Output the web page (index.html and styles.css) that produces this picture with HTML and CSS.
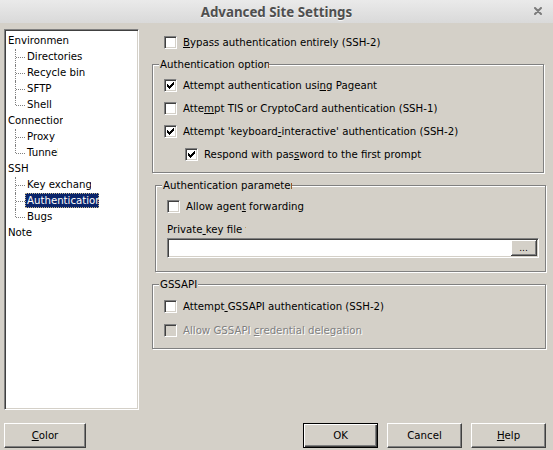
FILE: index.html
```html
<!DOCTYPE html>
<html lang="en">
<head>
<meta charset="utf-8">
<title>Advanced Site Settings</title>
<link rel="stylesheet" href="styles.css">
</head>
<body>
<div class="window">
  <header class="titlebar">
    <span class="title">Advanced Site Settings</span>
    <svg class="close" width="8" height="8" viewBox="0 0 8 8"><path d="M1 1L7 7M7 1L1 7" stroke="#7b7b7b" stroke-width="2" stroke-linecap="round"/></svg>
  </header>
  <div class="main">
    <div class="tree">
      <ul class="tree-list">
        <li>
          <div class="trow"><span class="tlabel clip-top">Environment</span></div>
          <ul class="kids">
            <li class="kid"><span class="tlabel">Directories</span></li>
            <li class="kid"><span class="tlabel">Recycle bin</span></li>
            <li class="kid"><span class="tlabel">SFTP</span></li>
            <li class="kid"><span class="tlabel">Shell</span></li>
          </ul>
        </li>
        <li>
          <div class="trow"><span class="tlabel clip-conn">Connection</span></div>
          <ul class="kids">
            <li class="kid"><span class="tlabel">Proxy</span></li>
            <li class="kid"><span class="tlabel clip-tun">Tunnels</span></li>
          </ul>
        </li>
        <li>
          <div class="trow"><span class="tlabel">SSH</span></div>
          <ul class="kids">
            <li class="kid"><span class="tlabel clip-kex">Key exchange</span></li>
            <li class="kid"><span class="tlabel clip-auth selected">Authentication</span></li>
            <li class="kid"><span class="tlabel">Bugs</span></li>
          </ul>
        </li>
        <li><div class="trow"><span class="tlabel">Note</span></div></li>
      </ul>
    </div>

    <div class="panel">
      <div class="check bypass"><span class="cb"></span><span class="ctext"><u>B</u>ypass authentication entirely (SSH-2)</span></div>

      <div class="group g-opts">
        <span class="legend legend-opts">Authentication options</span>
        <div class="check"><span class="cb"><svg width="11" height="11" viewBox="0 0 11 11"><path d="M2 4h1v3h-1zM3 5h1v3h-1zM4 6h1v3h-1zM5 5h1v3h-1zM6 4h1v3h-1zM7 3h1v3h-1zM8 2h1v3h-1z" fill="#000" shape-rendering="crispEdges"/></svg></span><span class="ctext">Attempt authentication usi<u>n</u>g Pageant</span></div>
        <div class="check"><span class="cb"></span><span class="ctext">Atte<u>m</u>pt TIS or CryptoCard authentication (SSH-1)</span></div>
        <div class="check"><span class="cb"><svg width="11" height="11" viewBox="0 0 11 11"><path d="M2 4h1v3h-1zM3 5h1v3h-1zM4 6h1v3h-1zM5 5h1v3h-1zM6 4h1v3h-1zM7 3h1v3h-1zM8 2h1v3h-1z" fill="#000" shape-rendering="crispEdges"/></svg></span><span class="ctext">Attempt 'keyboard<u>-</u>interactive' authentication (SSH-2)</span></div>
        <div class="check indent"><span class="cb"><svg width="11" height="11" viewBox="0 0 11 11"><path d="M2 4h1v3h-1zM3 5h1v3h-1zM4 6h1v3h-1zM5 5h1v3h-1zM6 4h1v3h-1zM7 3h1v3h-1zM8 2h1v3h-1z" fill="#000" shape-rendering="crispEdges"/></svg></span><span class="ctext">Respond with pas<u>s</u>word to the first prompt</span></div>
      </div>

      <div class="group g-params">
        <span class="legend legend-params">Authentication parameters</span>
        <div class="check"><span class="cb"></span><span class="ctext">Allow agen<u>t</u> forwarding</span></div>
        <div class="keylabel">Private<u> </u>key file for authentication:</div>
        <div class="keyfield"><span class="keyinput"></span><span class="browse">...</span></div>
      </div>

      <div class="group g-gss">
        <span class="legend">GSSAPI</span>
        <div class="check"><span class="cb"></span><span class="ctext">Attempt<u> </u>GSSAPI authentication (SSH-2)</span></div>
        <div class="check disabled second"><span class="cb"></span><span class="ctext">Allow GSSAPI <u>c</u>redential delegation</span></div>
      </div>
    </div>
  </div>

  <footer class="footer">
    <button class="btn btn-color" type="button"><u>C</u>olor</button>
    <button class="btn default" type="button">OK</button>
    <button class="btn" type="button">Cancel</button>
    <button class="btn" type="button"><u>H</u>elp</button>
  </footer>
</div>
</body>
</html>
```

FILE: styles.css
```css
* { box-sizing: border-box; }

html, body {
  margin: 0;
  padding: 0;
}

body {
  width: 553px;
  height: 450px;
  overflow: hidden;
  background: #d4d0c8;
  font-family: "DejaVu Sans", sans-serif;
  font-size: 10.2px;
  color: #000;
}

.window {
  width: 553px;
  height: 450px;
}

/* title bar */
.titlebar {
  position: relative;
  height: 23px;
  display: flex;
  align-items: center;
  justify-content: center;
  background: linear-gradient(#eaeaea, #d9d9d9);
}

.title {
  font-family: "Noto Sans", "Open Sans", sans-serif;
  font-weight: 700;
  font-size: 13.3px;
  color: #4f4f4f;
  text-shadow: 0 1px 0 rgba(255, 255, 255, 0.75);
  line-height: 18px;
}

.close {
  position: absolute;
  right: 11px;
  top: 7px;
}

/* main area */
.main {
  display: flex;
  height: 400px;
  padding: 6px 0 0 4px;
}

/* tree view */
.tree {
  width: 135px;
  height: 381px;
  flex: none;
  background: #fff;
  border: 1px solid;
  border-color: #808080 #fff #fff #808080;
  box-shadow: inset 1px 1px #404040, inset -1px -1px #d4d0c8;
  padding: 3px 0 0 1px;
}

.tree-list, .kids {
  list-style: none;
  margin: 0;
  padding: 0;
}

.trow, .kid {
  height: 16px;
  display: flex;
  align-items: flex-start;
}

.kid {
  position: relative;
  padding-left: 19px;
}

.kid::before {
  content: "";
  position: absolute;
  left: 10px;
  top: 8px;
  width: 9px;
  border-top: 1px dotted #808080;
}

.kid::after {
  content: "";
  position: absolute;
  left: 9px;
  top: 0;
  bottom: 0;
  border-left: 1px dotted #808080;
}

.kid:last-child::after {
  bottom: 8px;
}

.tlabel {
  display: block;
  height: 15px;
  line-height: 15px;
  padding: 0 2px;
  white-space: nowrap;
  overflow: hidden;
}

.clip-top { width: 63px; padding-right: 0; }
.clip-conn { width: 57px; padding-right: 0; }
.clip-tun { width: 33px; padding-right: 0; }
.clip-kex { width: 66px; padding-right: 0; }
.clip-auth { width: 74px; padding-right: 0; }

.selected {
  background: #0a246a;
  color: #fff;
  outline: 1px dotted #c9b98b;
  outline-offset: -1px;
}

/* right panel */
.panel {
  margin-left: 13px;
  width: 394px;
}

.check {
  display: flex;
  align-items: center;
  height: 13px;
  line-height: 13px;
  white-space: nowrap;
}

.check + .check {
  margin-top: 10px;
}

.cb {
  width: 13px;
  height: 13px;
  flex: none;
  background: #fff;
  border: 1px solid;
  border-color: #808080 #fff #fff #808080;
  box-shadow: inset 1px 1px #404040, inset -1px -1px #d4d0c8;
  margin-right: 6px;
}

.cb svg { display: block; }

.bypass {
  margin-top: 7px;
  padding-left: 12px;
}

.indent {
  padding-left: 21px;
}

.disabled .cb {
  background: #d4d0c8;
}

.disabled .ctext {
  color: #808080;
  text-shadow: 1px 1px 0 #fff;
}

/* group boxes */
.group {
  position: relative;
  border: 1px solid #808080;
  box-shadow: inset 1px 1px #fff, 1px 1px #fff;
  padding: 14px 11px 0 11px;
}

.legend {
  position: absolute;
  top: -7px;
  left: 6px;
  line-height: 13px;
  padding: 0 1px;
  background: #d4d0c8;
  white-space: nowrap;
  overflow: hidden;
}

.legend-opts { width: 110px; padding-right: 0; }
.legend-params { width: 130px; padding-right: 0; }

.g-opts {
  margin-top: 15px;
  width: 392px;
  height: 109px;
}

.g-params {
  margin-top: 12px;
  margin-left: 3px;
  width: 391px;
  height: 87px;
}

.g-gss {
  margin-top: 12px;
  width: 394px;
  height: 65px;
  padding-top: 15px;
}

.g-gss .second {
  margin-top: 11px;
}

.keylabel {
  margin-top: 10px;
  width: 79px;
  line-height: 13px;
  white-space: nowrap;
  overflow: hidden;
}

.keyfield {
  margin-top: 2px;
  width: 372px;
  height: 20px;
  display: flex;
  background: #fff;
  border: 1px solid;
  border-color: #808080 #fff #fff #808080;
  box-shadow: inset 1px 1px #404040, inset -1px -1px #d4d0c8;
  padding: 1px;
}

.keyinput {
  flex: 1;
}

.browse {
  width: 26px;
  height: 16px;
  flex: none;
  background: #d4d0c8;
  border-right: 1px solid #404040;
  border-bottom: 1px solid #404040;
  box-shadow: inset 1px 1px #fff, inset -1px -1px #808080;
  text-align: center;
  line-height: 15px;
  padding-top: 1px;
  font-size: 9px;
}

/* footer buttons */
.footer {
  display: flex;
  height: 25px;
  padding: 0 7px 0 4px;
  gap: 9px;
}

.btn {
  width: 75px;
  height: 25px;
  padding: 0;
  margin: 0;
  font: inherit;
  color: #000;
  background: #d4d0c8;
  border: 1px solid;
  border-color: #fff #404040 #404040 #fff;
  box-shadow: inset -1px -1px #808080;
  border-radius: 0;
  line-height: 13px;
}

.btn-color {
  width: 82px;
  margin-right: auto;
}

.btn.default {
  border: 1px solid #000;
  box-shadow: inset 1px 1px #fff, inset -1px -1px #404040, inset -2px -2px #808080;
}
```
